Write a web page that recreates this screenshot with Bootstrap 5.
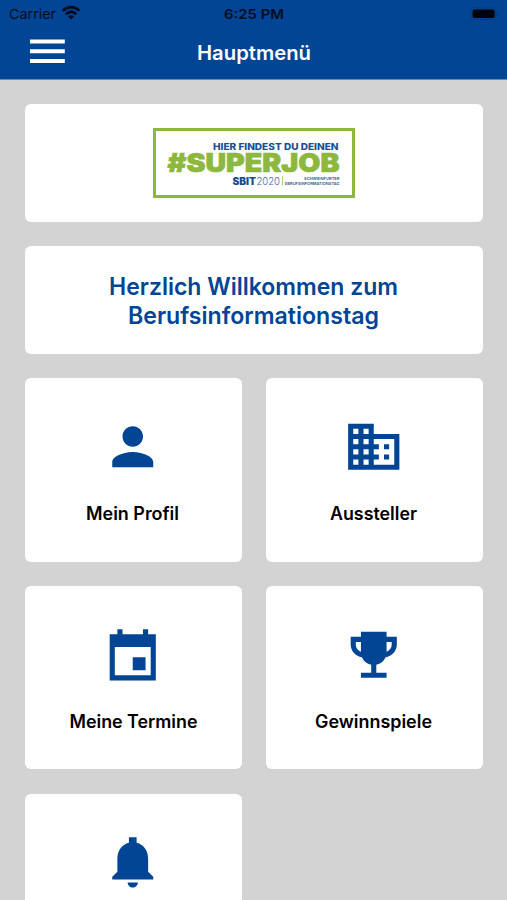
<!DOCTYPE html>
<html lang="de">
<head>
<meta charset="utf-8">
<meta name="viewport" content="width=device-width, initial-scale=1">
<title>Hauptmenü</title>
<link href="https://cdn.jsdelivr.net/npm/bootstrap@5.3.0/dist/css/bootstrap.min.css" rel="stylesheet">
<style>
  :root { --brand: #014594; }
  body { font-family: Inter, "Liberation Sans", sans-serif; background: #d3d3d3; color: #000; height: 900px; overflow: hidden; }
  svg { display: block; }
  svg text { font-family: Inter, "Liberation Sans", sans-serif; }
  .app-header { background: var(--brand); height: 79.5px; border-bottom: 1px solid #5b8fc4; }
  .status-bar { height: 27px; padding: 0 7px 0 9px; color: #020d1f; }
  .title-bar { height: 51px; padding-left: 30px; }
  .side { flex: 1 1 0; }
  .menu-main { height: 820.5px; overflow: hidden; padding: 24px 24.5px 0 25px; gap: 24.4px; }
  .tile { background: #fff; border: 0; border-radius: 6px; }
  .logo-tile { height: 118.5px; flex-shrink: 0; }
  .welcome-tile { height: 107.5px; flex-shrink: 0; color: var(--brand); }
  .menu-grid { display: grid; grid-template-columns: 1fr 1fr; gap: 24.4px; }
  .menu-tile { height: 183.4px; padding-top: 38px; padding-right: 1px; color: #000; }
  .menu-icon { width: 61.5px; height: 61.5px; fill: var(--brand); }
  .tile-label { height: 24px; margin-top: 23px; }
</style>
</head>
<body>
<header class="app-header">
  <div class="status-bar d-flex align-items-center">
    <div class="side d-flex align-items-center">
      <svg width="80" height="27" fill="#020d1f" aria-hidden="true">
        <text x="0" y="18.7" font-size="13.3" textLength="47" lengthAdjust="spacingAndGlyphs">Carrier</text>
        <g fill="none" stroke="#020d1f" stroke-width="2.8">
          <path d="M53.7 10.8C58.8 5.9 65.3 5.9 70.4 10.8"/>
          <path d="M56.8 14.2C60.1 11.2 64 11.2 67.3 14.2"/>
        </g>
        <path d="M59.1 16.4C61 14.9 63.1 14.9 65 16.4L62.05 19.5Z"/>
      </svg>
    </div>
    <svg width="62" height="27" fill="#020d1f"><text x="0" y="18.5" font-size="13.3" font-weight="600" textLength="60" lengthAdjust="spacingAndGlyphs">6:25 PM</text></svg>
    <div class="side d-flex justify-content-end">
      <svg width="30" height="14" aria-hidden="true">
        <rect x=".8" y=".9" width="25.4" height="11.6" rx="3.6" fill="none" stroke="#023b80"/>
        <rect x="2.5" y="2.4" width="22.2" height="8.7" rx="2.2" fill="#00040c"/>
        <path d="M27.5 5v4q1.5-.6 1.5-2t-1.5-2z" fill="#023b80"/>
      </svg>
    </div>
  </div>
  <div class="title-bar d-flex">
    <svg width="167" height="51" fill="#fff" role="img" aria-label="Menü">
      <path d="M0 12.4h34.8v4H0zM0 22.2h34.8v4H0zM0 32h34.8v4H0z"/>
    </svg>
    <svg width="116" height="51" fill="#fff"><text x="0" y="32.6" font-size="20" font-weight="600" textLength="114" lengthAdjust="spacingAndGlyphs">Hauptmenü</text></svg>
  </div>
</header>
<main class="menu-main d-flex flex-column">
  <section class="tile logo-tile card align-items-center justify-content-center">
    <svg width="202" height="70" viewBox="0 0 202 70">
      <rect x="1.5" y="1.5" width="199" height="67" fill="none" stroke="#8db83d" stroke-width="3"/>
      <text x="60" y="21.6" font-size="9.3" font-weight="800" fill="#204e8b" textLength="125.5" lengthAdjust="spacingAndGlyphs">HIER FINDEST DU DEINEN</text>
      <text x="14.5" y="44.2" font-size="25.5" font-weight="900" fill="#8db83d" stroke="#8db83d" stroke-width=".7" textLength="172" lengthAdjust="spacingAndGlyphs">#SUPERJOB</text>
      <text x="79.5" y="57" font-size="10" font-weight="900" fill="#174a8c" textLength="23.5" lengthAdjust="spacingAndGlyphs">SBIT</text>
      <text x="103.5" y="57" font-size="10" font-weight="300" fill="#476a9c" textLength="23.5" lengthAdjust="spacingAndGlyphs">2020</text>
      <path d="M129.5 48.2v9.3" stroke="#b3cf83"/>
      <text x="151" y="52.4" font-size="3.7" font-weight="600" fill="#315583" textLength="35.5" lengthAdjust="spacingAndGlyphs">SCHWEINFURTER</text>
      <text x="132" y="57.2" font-size="3.7" font-weight="600" fill="#315583" textLength="54.5" lengthAdjust="spacingAndGlyphs">BERUFSINFORMATIONSTAG</text>
    </svg>
  </section>
  <section class="tile welcome-tile card align-items-center justify-content-center">
    <svg width="292" height="66" fill="#014594" font-size="24" font-weight="600">
      <text x="1" y="28" textLength="289" lengthAdjust="spacingAndGlyphs">Herzlich Willkommen zum</text>
      <text x="20" y="57" textLength="251" lengthAdjust="spacingAndGlyphs">Berufsinformationstag</text>
    </svg>
  </section>
  <nav class="menu-grid" aria-label="Hauptmenü">
    <a href="#" class="tile menu-tile card align-items-center text-decoration-none">
      <svg class="menu-icon" viewBox="0 0 24 24"><path d="M12 12c2.21 0 4-1.79 4-4s-1.79-4-4-4-4 1.79-4 4 1.79 4 4 4zm0 2c-2.67 0-8 1.34-8 4v2h16v-2c0-2.66-5.33-4-8-4z"/></svg>
      <svg class="tile-label" width="95" height="24"><text x="1" y="18.5" font-size="18" font-weight="600" textLength="93" lengthAdjust="spacingAndGlyphs">Mein Profil</text></svg>
    </a>
    <a href="#" class="tile menu-tile card align-items-center text-decoration-none">
      <svg class="menu-icon" viewBox="0 0 24 24"><path d="M12 7V3H2v18h20V7H12zM6 19H4v-2h2v2zm0-4H4v-2h2v2zm0-4H4V9h2v2zm0-4H4V5h2v2zm4 12H8v-2h2v2zm0-4H8v-2h2v2zm0-4H8V9h2v2zm0-4H8V5h2v2zm10 12h-8v-2h2v-2h-2v-2h2v-2h-2V9h8v10zm-2-8h-2v2h2v-2zm0 4h-2v2h2v-2z"/></svg>
      <svg class="tile-label" width="89" height="24"><text x="1" y="18.5" font-size="18" font-weight="600" textLength="87" lengthAdjust="spacingAndGlyphs">Aussteller</text></svg>
    </a>
    <a href="#" class="tile menu-tile card align-items-center text-decoration-none">
      <svg class="menu-icon" viewBox="0 0 24 24"><path d="M6 2h2v2h8V2h2v2h3v18H3V4h3zM5 9v11h14V9zM12 13h5v5h-5z" fill-rule="evenodd"/></svg>
      <svg class="tile-label" width="130" height="24"><text x="1.5" y="18.5" font-size="18" font-weight="600" textLength="128" lengthAdjust="spacingAndGlyphs">Meine Termine</text></svg>
    </a>
    <a href="#" class="tile menu-tile card align-items-center text-decoration-none">
      <svg class="menu-icon" viewBox="0 0 24 24"><path d="M21 5h-4V3H7v2H3v3c0 2.55 1.92 4.63 4.39 4.94.63 1.5 1.98 2.63 3.61 2.96V19H7v2h10v-2h-4v-3.1c1.63-.33 2.98-1.46 3.61-2.96C19.08 12.63 21 10.55 21 8V5zM5 8V7h2v3.82C5.84 10.4 5 9.3 5 8zm14 0c0 1.3-.84 2.4-2 2.82V7h2v1z"/></svg>
      <svg class="tile-label" width="119" height="24"><text x="1" y="18.5" font-size="18" font-weight="600" textLength="117" lengthAdjust="spacingAndGlyphs">Gewinnspiele</text></svg>
    </a>
    <a href="#" class="tile menu-tile card align-items-center text-decoration-none">
      <svg class="menu-icon" viewBox="0 0 24 24"><path d="M12 21.7c1.1 0 2-.9 2-2h-4c0 1.1.9 2 2 2zm6-6.2v-5c0-3.07-1.63-5.64-4.5-6.32V2h-3v2.18C7.64 4.86 6 7.42 6 10.5v5l-2 2v1h16v-1z"/></svg>
    </a>
  </nav>
</main>
<script src="https://cdn.jsdelivr.net/npm/bootstrap@5.3.0/dist/js/bootstrap.bundle.min.js"></script>
</body>
</html>
